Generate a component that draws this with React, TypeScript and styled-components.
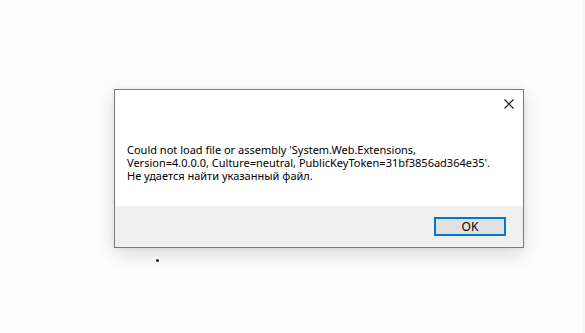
import { createGlobalStyle } from 'styled-components';
import styled from 'styled-components';

const GlobalStyle = createGlobalStyle`
  html, body {
    margin: 0;
    padding: 0;
    background: #fdfdfd;
  }
  * {
    box-sizing: border-box;
  }
`;

export default function App() {
  return (
    <>
      <GlobalStyle />
      <S.Desktop>
        <S.Dialog role='alertdialog'>
          <S.Body>
            <S.TitleBar>
              <S.CloseButton aria-label='Close'>
                <svg width='10' height='10' viewBox='0 0 10 10'>
                  <path d='M0.5 0.5 L9.5 9.5 M9.5 0.5 L0.5 9.5' stroke='#111' strokeWidth='1.1' />
                </svg>
              </S.CloseButton>
            </S.TitleBar>
            <S.Message>
              Could not load file or assembly 'System.Web.Extensions,
              <br />
              Version=4.0.0.0, Culture=neutral, PublicKeyToken=31bf3856ad364e35'.
              <br />
              Не удается найти указанный файл.
            </S.Message>
          </S.Body>
          <S.Footer>
            <S.OkButton>OK</S.OkButton>
          </S.Footer>
        </S.Dialog>
        <S.Dot />
      </S.Desktop>
    </>
  );
}

const S = {
  Desktop: styled.div`
    position: relative;
    width: 585px;
    height: 333px;
    padding: 89px 0 0 114px;
    background: #fdfdfd;
    font-family: 'Noto Sans', 'Open Sans', sans-serif;
    overflow: hidden;
    border-right: 2px solid #f6f6f6;
  `,

  Dialog: styled.div`
    width: 410px;
    height: 159px;
    display: flex;
    flex-direction: column;
    border: 1px solid #7a7a7a;
    background: #ffffff;
    box-shadow: 0 6px 18px rgba(0, 0, 0, 0.14), 0 0 6px rgba(0, 0, 0, 0.05);
  `,

  Body: styled.div`
    flex: 1;
    display: flex;
    flex-direction: column;
  `,

  TitleBar: styled.div`
    display: flex;
    justify-content: flex-end;
    padding: 9px 9px 0 0;
  `,

  CloseButton: styled.div`
    width: 10px;
    height: 10px;
    display: flex;
    svg {
      display: block;
    }
  `,

  Message: styled.p`
    margin: 34px 0 0 12px;
    font-size: 11px;
    line-height: 13px;
    color: #000;
  `,

  Footer: styled.div`
    height: 41px;
    display: flex;
    justify-content: flex-end;
    align-items: flex-start;
    padding: 11px 17px 0 0;
    background: #f0f0f0;
  `,

  OkButton: styled.button`
    width: 72px;
    height: 19px;
    padding: 0;
    border: 2px solid #0078d7;
    background: #e1e1e1;
    font-family: 'Noto Sans', 'Open Sans', sans-serif;
    font-size: 12px;
    line-height: 14px;
    color: #000;
  `,

  Dot: styled.span`
    position: absolute;
    left: 156px;
    top: 259px;
    width: 3px;
    height: 3px;
    border-radius: 50%;
    background: #222;
  `,
};
